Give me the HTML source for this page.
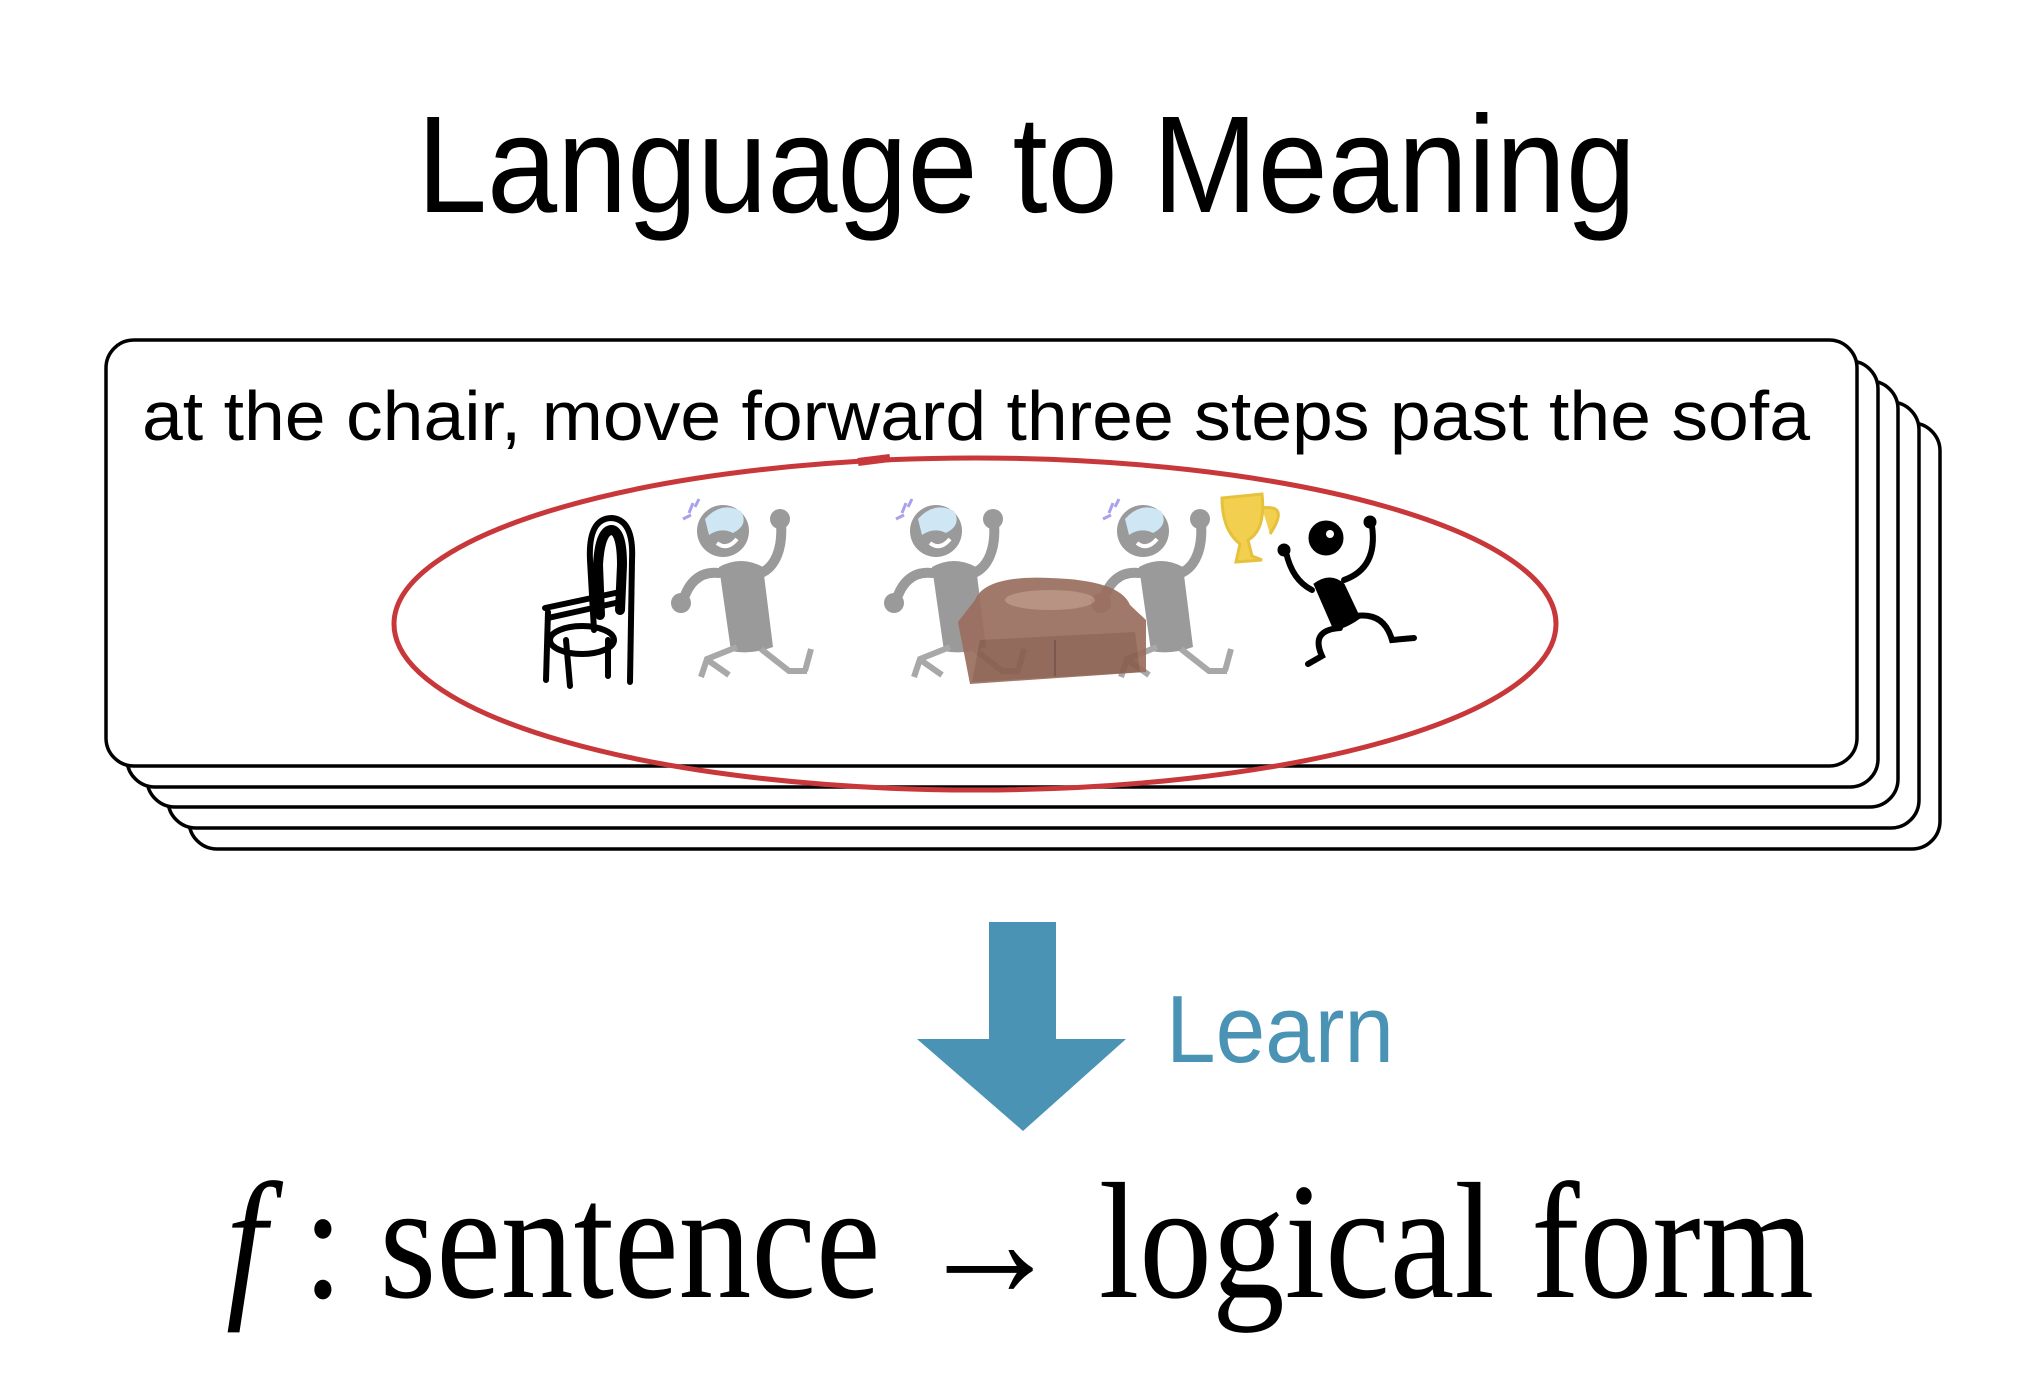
<!DOCTYPE html>
<html><head><meta charset="utf-8"><style>
html,body{margin:0;padding:0;background:#fff;width:2024px;height:1396px;overflow:hidden}
svg{display:block}
</style></head><body>
<svg width="2024" height="1396" viewBox="0 0 2024 1396" xmlns="http://www.w3.org/2000/svg">
<defs>
<g id="gf">
  <path d="M48 76 C30 74 18 84 12 104" stroke="#9a9a9a" stroke-width="10" fill="none" stroke-linecap="round"/>
  <circle cx="10" cy="106" r="10" fill="#9a9a9a"/>
  <path d="M90 76 C104 70 112 52 110 26" stroke="#9a9a9a" stroke-width="10" fill="none" stroke-linecap="round"/>
  <circle cx="109" cy="22" r="10" fill="#9a9a9a"/>
  <path d="M48 70 Q70 58 92 70 L102 150 Q80 158 60 154 Z" fill="#9a9a9a"/>
  <path d="M66 150 L36 162 L30 180 M38 164 L58 178" stroke="#a8a8a8" stroke-width="6" fill="none"/>
  <path d="M90 152 L118 174 L136 174 M134 174 L140 152" stroke="#a8a8a8" stroke-width="6" fill="none"/>
  <circle cx="52" cy="34" r="26" fill="#9a9a9a"/>
  <path d="M34 22 Q50 4 70 14 Q78 28 62 36 Q50 30 38 38 Z" fill="#cfe6f5"/>
  <path d="M46 46 Q56 54 66 42" stroke="#fff" stroke-width="4" fill="none"/>
  <path d="M24 10 L28 2 M18 16 L22 6 M12 22 L20 18" stroke="#a7a2ea" stroke-width="3"/>
</g>
</defs>
<text x="417" y="212" font-family="Liberation Sans, sans-serif" font-size="138" textLength="1219" lengthAdjust="spacingAndGlyphs">Language to Meaning</text>

<g fill="#fff" stroke="#000" stroke-width="3.5">
  <rect x="189" y="423" width="1751" height="426" rx="28"/>
  <rect x="168" y="402" width="1751" height="426" rx="28"/>
  <rect x="147" y="381" width="1751" height="426" rx="28"/>
  <rect x="127" y="361" width="1751" height="426" rx="28"/>
  <rect x="106" y="340" width="1751" height="426" rx="28"/>
</g>
<text x="142" y="440" font-family="Liberation Sans, sans-serif" font-size="70" textLength="1668" lengthAdjust="spacingAndGlyphs">at the chair, move forward three steps past the sofa</text>

<!-- chair -->
<g stroke="#000" fill="none" stroke-width="6" stroke-linecap="round">
  <path d="M594 630 L590 560 Q588 518 612 518 Q634 520 632 560 L630 682"/>
  <path d="M600 615 L598 565 Q600 530 612 530 Q622 532 622 565 L620 610" stroke-width="10"/>
  <path d="M545 608 L620 592 M548 618 L620 602"/>
  <ellipse cx="582" cy="640" rx="32" ry="14"/>
  <path d="M548 612 L546 680 M566 640 L570 686 M608 640 L608 676"/>
</g>
<use href="#gf" x="671" y="497"/>
<use href="#gf" x="884" y="497"/>
<use href="#gf" x="1091" y="497"/>
<!-- sofa -->
<g opacity="0.92">
  <path d="M975 600 Q985 575 1050 578 Q1120 580 1130 605 L1146 620 L1146 672 L970 684 L958 622 Z" fill="#9a6e5e"/>
  <path d="M980 640 L1135 632 L1140 672 L972 682 Z" fill="#8a5f50"/>
  <path d="M1055 640 L1055 676" stroke="#6f4a3e" stroke-width="2"/>
  <ellipse cx="1050" cy="600" rx="45" ry="10" fill="#b38a7a"/>
</g>
<!-- trophy -->
<path d="M1222 498 L1262 494 Q1266 530 1248 540 L1252 556 L1262 560 L1236 562 L1240 544 Q1222 530 1222 498 Z M1262 508 Q1290 504 1270 534" fill="#f2cf4e" stroke="#e6c13c" stroke-width="3"/>
<!-- black figure -->
<g fill="#000" stroke="#000" stroke-linecap="round">
  <circle cx="1326" cy="538" r="17"/>
  <path d="M1314 584 Q1330 572 1344 584 L1360 618 Q1346 628 1334 630 Z"/>
  <path d="M1312 590 Q1292 580 1286 552" fill="none" stroke-width="6"/>
  <circle cx="1284" cy="550" r="6"/>
  <path d="M1344 580 Q1378 568 1372 526" fill="none" stroke-width="6"/>
  <circle cx="1370" cy="522" r="6"/>
  <path d="M1340 628 Q1310 630 1322 656 L1308 664" fill="none" stroke-width="6"/>
  <path d="M1356 616 Q1384 612 1392 640 L1414 638" fill="none" stroke-width="6"/>
</g>
<circle cx="1330" cy="534" r="4" fill="#fff"/>

<!-- red ellipse -->
<ellipse cx="975" cy="624" rx="581" ry="166" fill="none" stroke="#c8383a" stroke-width="5"/>
<path d="M858 462 L890 458" stroke="#c8383a" stroke-width="8"/>

<!-- arrow -->
<rect x="989" y="922" width="67" height="118" fill="#4a93b4"/>
<polygon points="917,1039 1126,1039 1023,1131" fill="#4a93b4"/>
<text x="1166" y="1062" font-family="Liberation Sans, sans-serif" font-size="96" fill="#4a93b4" textLength="228" lengthAdjust="spacingAndGlyphs">Learn</text>

<text x="226" y="1297" font-family="Liberation Serif, serif" font-size="166" textLength="1588" lengthAdjust="spacingAndGlyphs"><tspan font-style="italic">f</tspan> : sentence → logical form</text>
</svg>
</body></html>
